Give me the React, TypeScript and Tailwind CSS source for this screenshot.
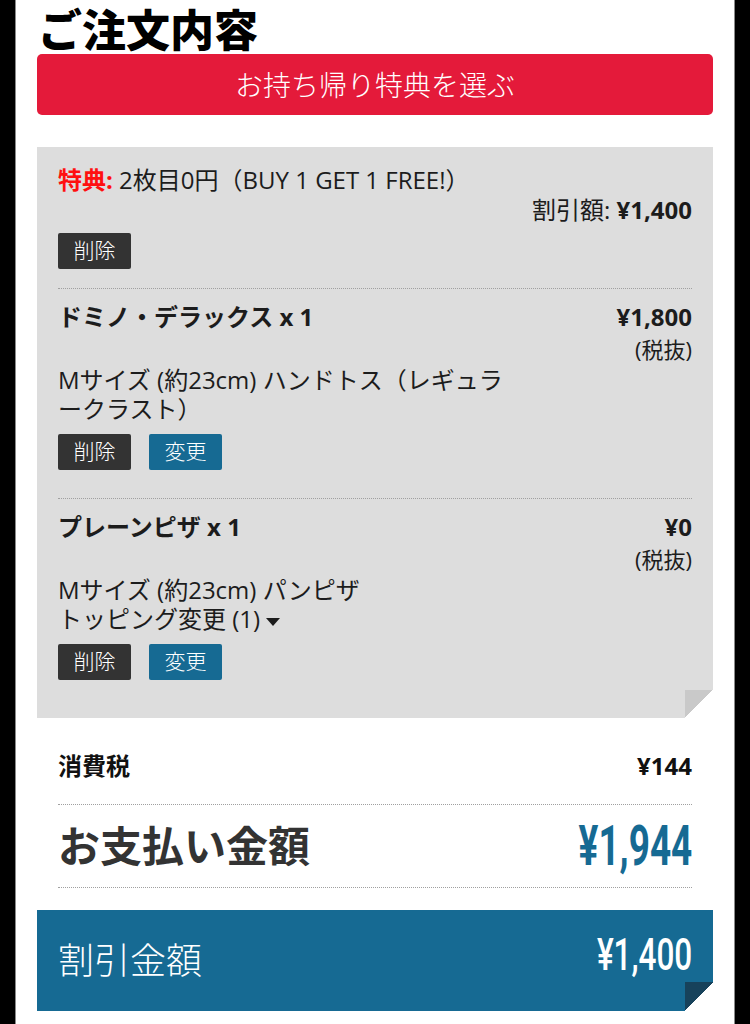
const font = "font-['Open_Sans','Noto_Sans_CJK_JP',sans-serif]";

type Item = {
  name: string;
  price: string;
  lines: string[];
  toggle?: boolean;
};

const items: Item[] = [
  {
    name: "ドミノ・デラックス x 1",
    price: "¥1,800",
    lines: ["Mサイズ (約23cm) ハンドトス（レギュラ", "ークラスト）"],
  },
  {
    name: "プレーンピザ x 1",
    price: "¥0",
    lines: ["Mサイズ (約23cm) パンピザ", "トッピング変更 (1)"],
    toggle: true,
  },
];

function DeleteButton() {
  return (
    <button className="flex h-[36px] w-[73px] items-center justify-center rounded-[2px] bg-[#333333] text-[21px] font-light text-white">
      削除
    </button>
  );
}

function ChangeButton() {
  return (
    <button className="flex h-[36px] w-[73px] items-center justify-center rounded-[2px] bg-[#166a93] text-[21px] font-light text-white">
      変更
    </button>
  );
}

export default function App() {
  return (
    <div className={`flex min-h-screen justify-center bg-black ${font}`}>
      <div className="w-[720px] border-x border-[#8a8a8a] bg-white px-[21px]">
        <h1 className="pt-[6px] pl-[1px] text-[44px] leading-[48px] font-black text-black">
          ご注文内容
        </h1>

        <button className="flex h-[61px] w-full items-center justify-center rounded-[5px] bg-[#e41a3a] text-[28px] font-light text-white">
          お持ち帰り特典を選ぶ
        </button>

        <section className="relative mt-[32px] bg-[#dddddd] px-[21px] pt-[18px] pb-[10px] text-[#1c1c1c]">
          <div className="pb-[19px]">
            <p className="text-[24px] leading-[30px]">
              <span className="font-bold text-[#ff1010]">特典:</span>{" "}
              2枚目0円（BUY 1 GET 1 FREE!）
            </p>
            <p className="text-right text-[24px] leading-[30px]">
              割引額: <span className="font-bold">¥1,400</span>
            </p>
            <div className="mt-[8px]">
              <DeleteButton />
            </div>
          </div>

          {items.map((item) => (
            <div
              key={item.name}
              className="border-t border-dotted border-[#a0a0a0] pt-[12px] pb-[28px]"
            >
              <div className="flex justify-between">
                <h3 className="text-[24px] leading-[32px] font-bold">
                  {item.name}
                </h3>
                <div className="text-right">
                  <p className="text-[24px] leading-[32px] font-bold">
                    {item.price}
                  </p>
                  <p className="text-[22px] leading-[32px]">(税抜)</p>
                </div>
              </div>
              <div className="max-w-[470px] text-[24px] leading-[29px]">
                {item.lines.map((line, i) => (
                  <p key={line}>
                    {line}
                    {item.toggle && i === item.lines.length - 1 && (
                      <span className="ml-[6px] inline-block h-0 w-0 border-x-[7px] border-t-[8px] border-x-transparent border-t-[#1c1c1c] align-middle" />
                    )}
                  </p>
                ))}
              </div>
              <div className="mt-[11px] flex gap-[18px]">
                <DeleteButton />
                <ChangeButton />
              </div>
            </div>
          ))}

          <div className="absolute right-0 bottom-0 h-[28px] w-[28px] bg-[linear-gradient(to_bottom_right,#c9c9c9_50%,#ffffff_50%)]" />
        </section>

        <div className="px-[21px]">
          <div className="flex items-center justify-between border-b border-dotted border-[#a0a0a0] pt-[32px] pb-[22px] text-[24px] leading-[32px] font-bold text-[#111]">
            <span>消費税</span>
            <span>¥144</span>
          </div>
          <div className="flex h-[83px] items-center justify-between border-b border-dotted border-[#a0a0a0]">
            <span className="text-[42px] leading-none font-bold text-[#333333]">
              お支払い金額
            </span>
            <span className="inline-block origin-right scale-x-[0.66] font-['Roboto',sans-serif] text-[56px] leading-none font-bold text-[#166a93]">
              ¥1,944
            </span>
          </div>
        </div>

        <div className="relative mt-[22px] flex h-[101px] items-center justify-between bg-[#166a93] px-[21px] text-white">
          <span className="text-[36px] font-light">割引金額</span>
          <span className="-mt-[12px] inline-block origin-right scale-x-[0.7] font-['Roboto',sans-serif] text-[45px] leading-none font-medium">
            ¥1,400
          </span>
          <div className="absolute right-0 bottom-0 h-[29px] w-[28px] bg-[linear-gradient(to_bottom_right,#17425b_50%,#ffffff_50%)]" />
        </div>
      </div>
    </div>
  );
}
